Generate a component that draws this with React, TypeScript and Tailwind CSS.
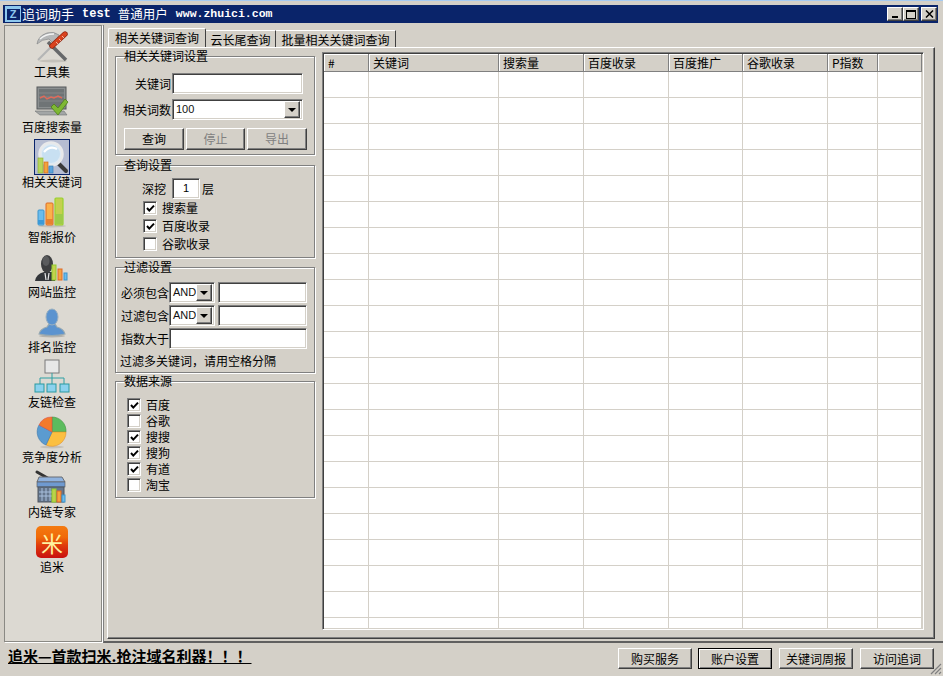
import type { ReactNode } from "react";

const raised =
  "border border-t-white border-l-white border-r-[#404040] border-b-[#404040] shadow-[inset_-1px_-1px_0_#808080] bg-[#d4d0c8]";
const sunken =
  "border border-t-[#808080] border-l-[#808080] border-r-white border-b-white shadow-[inset_1px_1px_0_#404040,inset_-1px_-1px_0_#d4d0c8] bg-white";

const latin = "font-['Liberation_Sans','Noto_Sans_CJK_SC',sans-serif]";

function Hammer() {
  return (
    <svg width="36" height="36" viewBox="0 0 36 36">
      <ellipse cx="19" cy="32" rx="14" ry="1.5" fill="#c4c1ba" />
      <path d="M17 18 L4 31" stroke="#b4b5b5" strokeWidth="2.2" />
      <path d="M14 13 L32 31" stroke="#66686a" strokeWidth="3.6" />
      <path d="M3 15 Q4 7 13 4 Q20 2 25 6 L20 15 L15 10 Q8 10 3 15 Z" fill="#b5b7b8" stroke="#85878a" strokeWidth="0.7" />
      <path d="M6 10 Q11 5 20 5" stroke="#f2f3f3" strokeWidth="1.4" fill="none" />
      <path d="M18 17 L31 5" stroke="#8f2410" strokeWidth="5.4" strokeLinecap="round" />
      <path d="M18 17 L31 5" stroke="#d9431f" strokeWidth="4" strokeLinecap="round" />
      <path d="M22 13 L24 15 M25 10 L27 12 M28 7 L30 9" stroke="#f3b29a" strokeWidth="1" />
    </svg>
  );
}

function Monitor() {
  return (
    <svg width="36" height="36" viewBox="0 0 36 36">
      <rect x="3" y="3" width="29" height="22" fill="#8b8f90" stroke="#55595a" />
      <rect x="5" y="5" width="25" height="18" fill="#6f7476" />
      <path d="M5 9 H30 M5 13 H30 M5 17 H30" stroke="#8c9092" strokeWidth="0.7" />
      <path d="M6 14 L10 12 L13 15 L17 13 L20 14 L24 12 L28 14" stroke="#e06a5a" strokeWidth="1.4" fill="none" />
      <path d="M1 27 L30 27 L33 31 L6 31 Z" fill="#a3a6a6" stroke="#6f7273" strokeWidth="0.6" />
      <path d="M17 23 L20 20 L24 24 L31 15 L34 18 L24 31 Z" fill="#7fb834" stroke="#4d7f1a" strokeWidth="0.8" />
    </svg>
  );
}

function Magnifier() {
  return (
    <svg width="34" height="34" viewBox="0 0 34 34">
      <path d="M22 22 L31 31" stroke="#3a3a3a" strokeWidth="4" strokeLinecap="round" />
      <circle cx="16" cy="14" r="11.5" fill="#dfeaf3" stroke="#e8e9ea" strokeWidth="2.5" />
      <circle cx="16" cy="14" r="9" fill="#c8e0f2" />
      <path d="M9 12 Q15 5 22 9" stroke="#ffffff" strokeWidth="2.2" fill="none" />
      <rect x="3" y="18" width="5" height="15" fill="#b6d65a" stroke="#8fb236" strokeWidth="0.7" />
      <rect x="9" y="22" width="4" height="11" fill="#f2a33c" stroke="#d2691f" strokeWidth="0.7" />
      <rect x="14" y="26" width="4" height="7" fill="#5ba4dc" stroke="#3c82b8" strokeWidth="0.7" />
    </svg>
  );
}

function Bars() {
  return (
    <svg width="36" height="36" viewBox="0 0 36 36">
      <ellipse cx="18" cy="32" rx="14" ry="1.5" fill="#c4c1ba" />
      <rect x="4" y="16" width="6" height="15" rx="1" fill="#6bbcec" stroke="#3c94cc" />
      <rect x="4" y="26" width="6" height="4" fill="#3b9ad8" />
      <rect x="12" y="9" width="7" height="22" rx="1" fill="#fbb14a" stroke="#de6a26" />
      <rect x="12" y="25" width="7" height="5" fill="#e88030" />
      <rect x="21" y="4" width="8" height="27" rx="1" fill="#c4d04e" stroke="#97d22e" strokeWidth="1.2" />
      <rect x="21" y="20" width="8" height="10" fill="#9ecb48" />
    </svg>
  );
}

function PersonBars() {
  return (
    <svg width="36" height="36" viewBox="0 0 36 36">
      <path d="M1 32 Q2 25 10 23 L21 23 L21 32 Z" fill="#33363a" />
      <ellipse cx="13" cy="15" rx="6" ry="9" fill="#3d3e40" />
      <ellipse cx="12" cy="12" rx="3.5" ry="5" fill="#5a5b5d" />
      <path d="M11 24 L12 31 M15 24 L14 31" stroke="#e8e8e8" strokeWidth="1.2" />
      <rect x="18" y="16" width="4" height="15" fill="#c4d04e" stroke="#8ecb2c" />
      <rect x="24" y="20" width="4" height="11" fill="#f6a23e" stroke="#de6a26" />
      <rect x="30" y="24" width="3" height="7" fill="#6bbcec" stroke="#3c94cc" />
    </svg>
  );
}

function Person() {
  return (
    <svg width="36" height="36" viewBox="0 0 36 36">
      <ellipse cx="18" cy="32" rx="13" ry="1.5" fill="#b4b2ac" />
      <path d="M5 30 Q6 25 13 23 L15 20 L21 20 L23 23 Q30 25 31 30 Q18 33 5 30 Z" fill="#5b93cf" stroke="#98a9b0" strokeWidth="1.2" />
      <ellipse cx="18" cy="13" rx="6" ry="8" fill="#5b93cf" stroke="#9ab0c0" strokeWidth="1" />
    </svg>
  );
}

function Tree() {
  return (
    <svg width="36" height="36" viewBox="0 0 36 36">
      <rect x="11" y="1" width="14" height="13" fill="#e7e7e7" stroke="#7b7b7b" />
      <path d="M18 14 V19 M6 25 V19 H30 V25 M18 19 V25" stroke="#2fa0a4" strokeWidth="1" fill="none" />
      <rect x="1" y="25" width="9" height="8" fill="#8cd2ee" stroke="#2b9aa0" />
      <rect x="13" y="25" width="9" height="8" fill="#8cd2ee" stroke="#2b9aa0" />
      <rect x="26" y="25" width="9" height="8" fill="#8cd2ee" stroke="#2b9aa0" />
    </svg>
  );
}

function Pie() {
  return (
    <svg width="36" height="36" viewBox="0 0 36 36">
      <ellipse cx="18" cy="33" rx="12" ry="1.5" fill="#c4c1ba" />
      <path d="M18 18 L18 3 A14 14 0 0 1 32 18 Z" fill="#5cbc5e" stroke="#3f9440" strokeWidth="0.6" />
      <path d="M18 18 L32 18 A14 14 0 0 1 12 31 Z" fill="#fbbf40" stroke="#e0912a" strokeWidth="0.6" />
      <path d="M18 18 L12 31 A14 14 0 0 1 5 11 Z" fill="#5b9bd0" stroke="#3c78ab" strokeWidth="0.6" />
      <path d="M18 18 L5 11 A14 14 0 0 1 18 3 Z" fill="#f47a2c" stroke="#d9534f" strokeWidth="0.6" />
    </svg>
  );
}

function Basket() {
  return (
    <svg width="36" height="36" viewBox="0 0 36 36">
      <path d="M3 3 L17 11" stroke="#333" strokeWidth="3" strokeLinecap="round" />
      <path d="M3 13 L5 8 H28 L31 13 Z" fill="#8fb2de" stroke="#6a6d72" />
      <rect x="3" y="13" width="28" height="5" fill="#6f9ad0" stroke="#555" strokeWidth="0.6" />
      <rect x="4" y="18" width="26" height="15" fill="#65768c" stroke="#4f5660" />
      <path d="M8 19 V32 M12 19 V32 M16 19 V32 M5 23 H20 M5 27 H20" stroke="#a8bfdc" strokeWidth="1" />
      <rect x="18" y="20" width="4" height="13" fill="#bcd04c" stroke="#93cf2c" />
      <rect x="23" y="22" width="4" height="11" fill="#f6a23e" stroke="#de6a26" />
      <rect x="28" y="26" width="3" height="7" fill="#6bbcec" stroke="#3c94cc" />
    </svg>
  );
}

function Zhuimi() {
  return (
    <div className="w-[32px] h-[32px] rounded-[5px] flex items-center justify-center bg-[linear-gradient(#f47a10_0%,#f06a08_35%,#e03c0c_60%,#c81010_100%)]">
      <span className="text-[22px] leading-[30px] text-[#fff3a0] font-['Noto_Sans_CJK_SC',sans-serif]">米</span>
    </div>
  );
}

const navItems: { label: string; icon: ReactNode; selected?: boolean }[] = [
  { label: "工具集", icon: <Hammer /> },
  { label: "百度搜索量", icon: <Monitor /> },
  { label: "相关关键词", icon: <Magnifier />, selected: true },
  { label: "智能报价", icon: <Bars /> },
  { label: "网站监控", icon: <PersonBars /> },
  { label: "排名监控", icon: <Person /> },
  { label: "友链检查", icon: <Tree /> },
  { label: "竞争度分析", icon: <Pie /> },
  { label: "内链专家", icon: <Basket /> },
  { label: "追米", icon: <Zhuimi /> },
];

function Group({ title, className, children }: { title: string; className: string; children: ReactNode }) {
  return (
    <div className={`relative w-[200px] border border-[#808080] shadow-[inset_1px_1px_0_#fff,1px_1px_0_#fff] ${className}`}>
      <span className="absolute left-[8px] top-[-9px] leading-[16px]">{title}</span>
      {children}
    </div>
  );
}

function Check({ checked, className = "" }: { checked?: boolean; className?: string }) {
  return (
    <span className={`${sunken} w-[14px] h-[14px] shrink-0 flex items-center justify-center ${className}`}>
      {checked && (
        <svg width="9" height="9" viewBox="0 0 9 9">
          <path d="M1 4 L3.3 6.6 L8 1.6" stroke="#000" strokeWidth="2" fill="none" />
        </svg>
      )}
    </span>
  );
}

function Arrow({ className }: { className: string }) {
  return (
    <span className={`${raised} flex items-center justify-center ${className}`}>
      <span className="w-0 h-0 border-x-[4px] border-x-transparent border-t-[4px] border-t-black" />
    </span>
  );
}

function Combo({ value, className, arrow }: { value: string; className: string; arrow: string }) {
  return (
    <div className={`${sunken} flex items-center p-[2px] ${className}`}>
      <span className={`${latin} flex-1 text-[11px] text-[#111] pl-[1px]`}>{value}</span>
      <Arrow className={arrow} />
    </div>
  );
}

const columns = [
  { title: "#", cell: "w-[45px]" },
  { title: "关键词", cell: "w-[130px]" },
  { title: "搜索量", cell: "w-[85px]" },
  { title: "百度收录", cell: "w-[85px]" },
  { title: "百度推广", cell: "w-[74px]" },
  { title: "谷歌收录", cell: "w-[85px]" },
  { title: "P指数", cell: "w-[50px]" },
  { title: "", cell: "flex-1" },
];

const rows = Array.from({ length: 22 }, (_, i) => i);

function ResultsTable() {
  return (
    <div className={`${sunken} w-[602px] h-[578px] overflow-hidden p-[1px]`}>
      <div className="flex h-[18px]">
        {columns.map((c) => (
          <div
            key={c.title || "blank"}
            className={`${c.cell} h-[18px] leading-[17px] pl-[4px] bg-[#d4d0c8] border-r border-b border-r-[#808080] border-b-[#808080] shadow-[inset_1px_1px_0_#fff]`}
          >
            {c.title}
          </div>
        ))}
      </div>
      {rows.map((r) => (
        <div key={r} className="flex h-[26px] border-b border-[#d4d0c8]">
          {columns.map((c) => (
            <div key={c.title || "blank"} className={`${c.cell} border-r border-[#d4d0c8]`} />
          ))}
        </div>
      ))}
    </div>
  );
}

export default function App() {
  return (
    <div className="relative w-[943px] h-[676px] overflow-hidden bg-[#d4d0c8] text-black text-[12px] font-['Noto_Sans_CJK_SC','Liberation_Sans',sans-serif]">
      <div className="h-[1px] bg-[#a6caf0]" />
      {/* title bar */}
      <div className="mt-[4px] ml-[3px] w-[935px] h-[18px] bg-[#0a246a] flex items-center text-white">
        <div className="ml-[2px] w-[16px] h-[16px] bg-[#8ec8ee] flex items-center justify-center">
          <span className="w-[13px] h-[11px] bg-[#0a246a] text-[#8ec8ee] text-[11px] leading-[11px] font-bold text-center font-['Liberation_Sans',sans-serif]">Z</span>
        </div>
        <span className="ml-[1px] text-[13px] leading-[18px]">追词助手</span>
        <span className="ml-[8px] font-['Liberation_Mono',monospace] font-bold text-[12px]">test</span>
        <span className="ml-[7px] text-[12.5px] leading-[18px]">普通用户</span>
        <span className="ml-[8px] font-['Liberation_Mono',monospace] font-bold text-[11.5px]">www.zhuici.com</span>
        <div className="ml-auto mr-[1px] flex items-center text-black">
          <span className={`${raised} w-[16px] h-[14px] flex items-end justify-center pb-[2px]`}>
            <span className="w-[6px] h-[2px] bg-black" />
          </span>
          <span className={`${raised} w-[16px] h-[14px] flex items-center justify-center`}>
            <span className="w-[10px] h-[9px] border border-black border-t-2" />
          </span>
          <span className={`${raised} ml-[2px] w-[16px] h-[14px] flex items-center justify-center`}>
            <svg width="9" height="8" viewBox="0 0 9 8">
              <path d="M1 0.5 L8 7.5 M8 0.5 L1 7.5" stroke="#000" strokeWidth="1.5" />
            </svg>
          </span>
        </div>
      </div>

      <div className="mt-[2px] pl-[4px] flex h-[618px]">
        {/* nav */}
        <nav className="w-[98px] h-[617px] border border-[#8a8984] bg-[#dcd9d2] pt-[3px] pr-[2px] shadow-[1px_1px_0_#fff]">
          {navItems.map((item) => (
            <div key={item.label} className="h-[55px] flex flex-col items-center">
              <div
                className={`w-[36px] h-[36px] flex items-center justify-center ${
                  item.selected ? "border border-[#0a246a] bg-[#b6bdd2]" : ""
                }`}
              >
                {item.icon}
              </div>
              <span className="leading-[14px]">{item.label}</span>
            </div>
          ))}
        </nav>

        {/* right side */}
        <div className="ml-[1px] flex-1 border-l border-b-2 border-l-[#808080] border-b-[#606060] pl-[3px] pt-[3px]">
          <div className="flex h-[19px] items-end pl-[1px]">
            <div className="relative z-10 w-[98px] h-[19px] leading-[17px] text-center bg-[#d4d0c8] border-t border-l border-white border-r border-r-[#404040] rounded-t-[2px]">
              相关关键词查询
            </div>
            <div className="w-[70px] h-[17px] leading-[17px] text-center border-t border-t-white border-r border-r-[#404040]">
              云长尾查询
            </div>
            <div className="w-[120px] h-[17px] leading-[17px] text-center border-t border-t-white border-r border-r-[#404040]">
              批量相关关键词查询
            </div>
          </div>
          <div className="w-[828px] h-[592px] flex border border-t-white border-l-white border-r-[#404040] border-b-[#404040] shadow-[inset_-1px_-1px_0_#808080] pl-[7px] pt-[4px]">
            <div className="w-[200px] shrink-0 flex flex-col pt-[4px]">
              <Group title="相关关键词设置" className="h-[99px] pt-[16px]">
                <div className="flex items-center h-[21px]">
                  <span className="w-[56px] text-right pr-[1px]">关键词</span>
                  <div className={`${sunken} w-[131px] h-[21px]`} />
                </div>
                <div className="flex items-center h-[21px] mt-[5px]">
                  <span className="w-[56px] text-right pr-[1px]">相关词数</span>
                  <Combo value="100" className="w-[131px] h-[21px]" arrow="w-[16px] h-[17px]" />
                </div>
                <div className="flex gap-[2px] pl-[8px] mt-[8px]">
                  <button className={`${raised} w-[60px] h-[22px] leading-[18px]`}>查询</button>
                  <button className={`${raised} w-[59px] h-[22px] leading-[18px] text-[#808080]`}>停止</button>
                  <button className={`${raised} w-[60px] h-[22px] leading-[18px] text-[#808080]`}>导出</button>
                </div>
              </Group>

              <Group title="查询设置" className="h-[93px] mt-[10px] pt-[12px]">
                <div className="flex items-center h-[21px] pl-[26px]">
                  <span className="w-[30px]">深挖</span>
                  <div className={`${sunken} ${latin} w-[28px] h-[21px] text-[11px] leading-[19px] text-center`}>1</div>
                  <span className="ml-[2px]">层</span>
                </div>
                <div className="flex flex-col pl-[27px]">
                  {[
                    { label: "搜索量", on: true },
                    { label: "百度收录", on: true },
                    { label: "谷歌收录", on: false },
                  ].map((o) => (
                    <label key={o.label} className="flex items-center h-[18px] gap-[5px]">
                      <Check checked={o.on} />
                      {o.label}
                    </label>
                  ))}
                </div>
              </Group>

              <Group title="过滤设置" className="h-[106px] mt-[9px] pt-[14px] pl-[5px]">
                <div className="flex items-center h-[21px]">
                  <span className="w-[48px]">必须包含</span>
                  <Combo value="AND" className="w-[46px] h-[21px]" arrow="w-[16px] h-[17px]" />
                  <div className={`${sunken} ml-[3px] w-[89px] h-[21px]`} />
                </div>
                <div className="flex items-center h-[21px] mt-[2px]">
                  <span className="w-[48px]">过滤包含</span>
                  <Combo value="AND" className="w-[46px] h-[21px]" arrow="w-[16px] h-[17px]" />
                  <div className={`${sunken} ml-[3px] w-[89px] h-[21px]`} />
                </div>
                <div className="flex items-center h-[21px] mt-[2px]">
                  <span className="w-[48px]">指数大于</span>
                  <div className={`${sunken} w-[138px] h-[21px]`} />
                </div>
                <div className="mt-[4px] -ml-[1px] leading-[16px]">过滤多关键词，请用空格分隔</div>
              </Group>

              <Group title="数据来源" className="h-[117px] mt-[8px] pt-[15px] pl-[11px]">
                {[
                  { label: "百度", on: true },
                  { label: "谷歌", on: false },
                  { label: "搜搜", on: true },
                  { label: "搜狗", on: true },
                  { label: "有道", on: true },
                  { label: "淘宝", on: false },
                ].map((o) => (
                  <label key={o.label} className="flex items-center h-[16px] gap-[5px]">
                    <Check checked={o.on} />
                    {o.label}
                  </label>
                ))}
              </Group>
            </div>
            <div className="ml-[7px]">
              <ResultsTable />
            </div>
          </div>
        </div>
      </div>

      {/* bottom bar */}
      <div className="flex items-center h-[22px] mt-[4px] pl-[8px]">
        <span className="font-bold underline text-[15px] leading-[18px] mb-[4px]">追米—首款扫米.抢注域名利器！！！</span>
        <div className="ml-auto mr-[9px] flex items-center">
          <button className={`${raised} w-[74px] h-[21px] leading-[17px] mr-[6px]`}>购买服务</button>
          <button className={`w-[74px] h-[21px] leading-[17px] mr-[7px] bg-[#d4d0c8] border border-black shadow-[inset_1px_1px_0_#fff,inset_-1px_-1px_0_#808080]`}>账户设置</button>
          <button className={`${raised} w-[74px] h-[21px] leading-[17px] mr-[7px]`}>关键词周报</button>
          <button className={`${raised} w-[74px] h-[21px] leading-[17px]`}>访问追词</button>
        </div>
      </div>
      <svg className="absolute right-[1px] bottom-[1px]" width="12" height="12" viewBox="0 0 12 12">
        <path d="M11 1 L1 11 M11 5 L5 11 M11 9 L9 11" stroke="#808080" strokeWidth="1.2" />
      </svg>
    </div>
  );
}
